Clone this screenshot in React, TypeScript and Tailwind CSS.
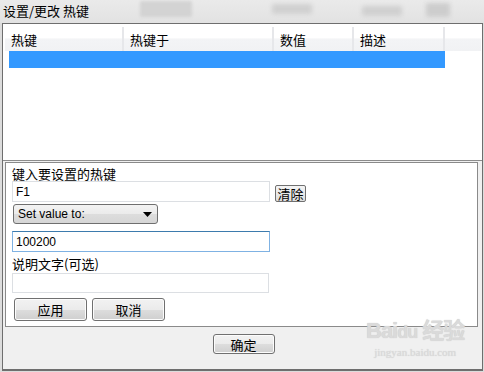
import React from "react";

const cjk = { fontFamily: '"SimSun","Noto Sans CJK SC","Liberation Sans",sans-serif' };

function WinButton({ label, w, h }: { label: string; w: string; h: string }) {
  return (
    <div
      className={`${w} ${h} rounded-[3px] border border-[#707070] bg-[linear-gradient(#f2f2f2_0%,#ebebeb_50%,#dddddd_51%,#cfcfcf_100%)] flex items-center justify-center text-[13px] text-black leading-none shadow-[inset_0_0_0_1px_#fcfcfc]`}
    >
      {label}
    </div>
  );
}

export default function App() {
  return (
    <div
      className="relative w-[484px] h-[372px] overflow-hidden bg-[#dcdcdc] flex flex-col text-black"
      style={cjk}
    >
      {/* title bar */}
      <div className="h-[23px] flex items-center pl-[3px] bg-[linear-gradient(#eaeaea,#e2e2e2)] text-[13px] leading-none relative">
        <span className="mt-[-2px]">设置/更改 热键</span>
        <div className="ml-[51px] w-[52px] h-[16px] mt-[-6px] rounded-[2px] bg-[#d3d3d3] blur-[1.5px]" />
        <div className="ml-[80px] w-[40px] h-[10px] mt-[-6px] rounded-[2px] bg-[#d0d0d0] blur-[2px]" />
        <div className="ml-[50px] w-[40px] h-[10px] mt-[-2px] rounded-[2px] bg-[#d0d0d0] blur-[2px]" />
        <div className="ml-[24px] w-[24px] h-[14px] mt-[-4px] rounded-[2px] bg-[#cdcdcd] blur-[2px]" />
      </div>

      {/* window body */}
      <div className="ml-[2px] w-[481px] h-[348px] border border-[#6e6e6e] border-b-[2px] bg-[#f0f0f0] flex flex-col">
        {/* list view */}
        <div className="h-[137px] bg-white pt-[3px] pl-[2px] pr-[1px] border-b border-[#8c8c8c] flex flex-col">
          <div className="h-[24px] flex bg-[linear-gradient(#ffffff_0%,#ffffff_45%,#f3f4f6_50%,#f1f2f4_100%)] text-[13px] leading-none">
            <div className="w-[119px] border-r-[2px] border-[#e6e7ea] flex items-center pl-[6px]">热键</div>
            <div className="w-[150px] border-r-[2px] border-[#e6e7ea] flex items-center pl-[6px]">热键于</div>
            <div className="w-[80px] border-r-[2px] border-[#e6e7ea] flex items-center pl-[6px]">数值</div>
            <div className="w-[91px] border-r-[2px] border-[#e6e7ea] flex items-center pl-[6px]">描述</div>
            <div className="flex-1" />
          </div>
          <div className="ml-[4px] w-[436px] h-[17px] bg-[#3399ff]" />
        </div>

        {/* edit panel */}
        <div className="ml-[2px] mt-[1px] w-[473px] h-[165px] border border-[#8a8a8a] bg-white flex flex-col pl-[6px]">
          <div className="h-[17px] pt-[4px] text-[13px] leading-none">键入要设置的热键</div>
          <div className="flex items-end gap-[5px] mt-[1px]">
            <div className="w-[258px] h-[21px] border border-[#dcdfe3] flex items-center pl-[3px] text-[12px] leading-none" style={{ fontFamily: '"Liberation Sans",sans-serif' }}>
              F1
            </div>
            <div className="w-[31px] h-[17px] rounded-[2px] border border-[#707070] bg-[linear-gradient(#f4f4f4,#dedede)] flex items-center justify-center text-[13px] leading-none">
              清除
            </div>
          </div>
          <div className="mt-[2px] ml-[1px] w-[145px] h-[20px] rounded-[3px] border border-[#6f6f6f] bg-[linear-gradient(#f3f3f3_0%,#ebebeb_50%,#dddddd_51%,#d6d6d6_100%)] flex items-center pl-[4px] pr-[5px] text-[12px] leading-none" style={{ fontFamily: '"Liberation Sans",sans-serif' }}>
            <span className="flex-1">Set value to:</span>
            <svg width="9" height="5" viewBox="0 0 9 5">
              <path d="M0 0 H9 L4.5 5 Z" fill="#000" />
            </svg>
          </div>
          <div className="mt-[7px] w-[258px] h-[21px] border border-[#7fb2e3] border-t-[#3d7bad] flex items-center pl-[3px] text-[12px] leading-none" style={{ fontFamily: '"Liberation Sans",sans-serif' }}>
            100200
          </div>
          <div className="h-[19px] pt-[5px] text-[13px] leading-none">说明文字(可选)</div>
          <div className="mt-[2px] w-[257px] h-[20px] border border-[#dcdfe3]" />
          <div className="flex gap-[5px] mt-[5px] ml-[2px]">
            <WinButton label="应用" w="w-[73px]" h="h-[23px]" />
            <WinButton label="取消" w="w-[73px]" h="h-[23px]" />
          </div>
        </div>

        {/* footer */}
        <div className="flex-1 flex justify-center pt-[7px] pl-[2px]">
          <WinButton label="确定" w="w-[62px]" h="h-[20px]" />
        </div>
      </div>

      {/* watermark */}
      <div className="absolute left-[366px] top-[320px] flex flex-col items-center text-[#dadada] leading-none pointer-events-none">
        <div className="text-[22px] font-bold tracking-[-1px]" style={{ fontFamily: '"Liberation Sans","Noto Sans CJK SC",sans-serif', textShadow: "0 0 1px #c4c4c4" }}>
          Bai<span className="text-[18px]">du</span> 经验
        </div>
        <div className="text-[11px] mt-[5px]" style={{ fontFamily: '"Liberation Serif",serif', textShadow: "0 0 1px #cfcfcf" }}>
          jingyan.baidu.com
        </div>
      </div>
    </div>
  );
}
